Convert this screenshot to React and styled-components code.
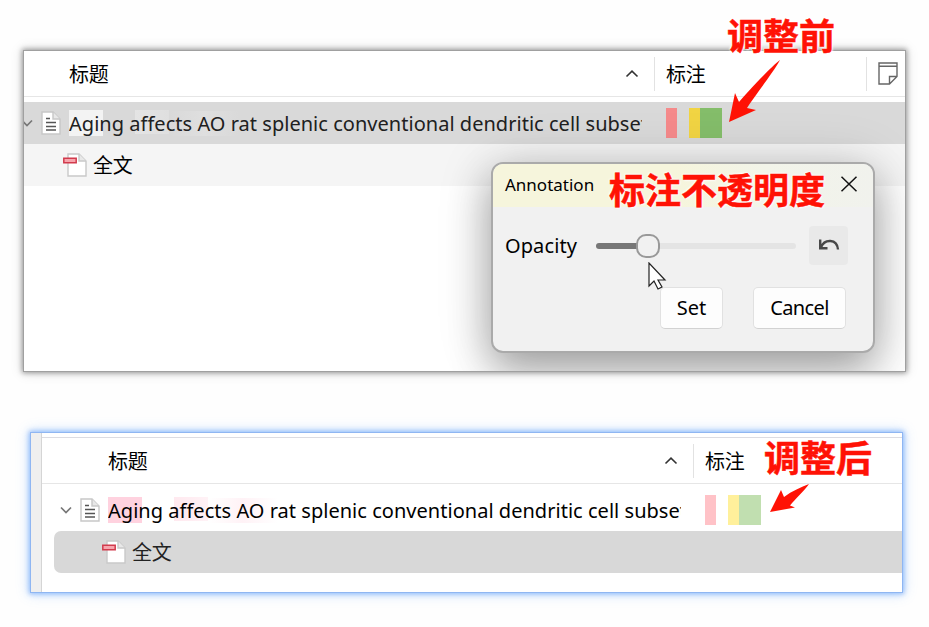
import React from "react";
import styled, { createGlobalStyle } from "styled-components";

const GlobalStyle = createGlobalStyle`
  * { box-sizing: border-box; }
  body {
    margin: 0;
    background: #fefefe;
    color: #000;
    font: 20px/26px "Noto Sans", "Noto Sans CJK SC", sans-serif;
  }
`;

const Page = styled.main`
  position: relative;
  width: 929px;
  height: 627px;
  padding: 51px 0 0 24px;
  overflow: hidden;
`;

const BeforePanel = styled.section`
  position: relative;
  width: 881px;
  height: 320px;
  background: #fff;
  box-shadow: 0 0 0 1px #a0a0a0, 0 0 5px 2px rgba(0, 0, 0, 0.36), 0 0 12px 2px rgba(0, 0, 0, 0.12);
`;

const Clip = styled.div`
  height: 100%;
  overflow: hidden;
`;

const DialogLayer = styled.div`
  position: absolute;
  inset: 0;
  overflow: hidden;
`;

const AfterPanel = styled.section`
  display: flex;
  width: 871px;
  height: 159px;
  margin: 62px 0 0 7px;
  background: #fff;
  box-shadow: 0 0 0 1px #8fb6f2, 0 0 5px 2px rgba(70, 140, 245, 0.55), 0 0 12px 2px rgba(80, 155, 250, 0.28);
`;

const Gutter = styled.div`
  width: 11px;
  background: #efefef;
  border-right: 1px solid #d5d5d5;
`;

const Tree = styled.div`
  flex: 1;
  min-width: 0;
  padding-top: 4px;
`;

const Header = styled.header`
  display: flex;
  align-items: center;
  height: ${(p) => p.$height}px;
  padding-left: ${(p) => p.$indent}px;
  border-top: ${(p) => (p.$topLine ? "1px solid #dcdce2" : "0")};
  border-bottom: 1px solid #e6e6e6;
  margin-bottom: 5px;
`;

const HeaderLabel = styled.span`
  font: 20px/26px "Noto Sans CJK SC", sans-serif;
  letter-spacing: -0.3px;
  width: ${(p) => p.$width || "auto"};
`;

const Divider = styled.i`
  width: 1px;
  height: 34px;
  background: #e2e2e2;
  margin: 0 ${(p) => p.$after || 0}px 0 ${(p) => p.$before}px;
`;

const Row = styled.div`
  display: flex;
  align-items: center;
  height: 42px;
  padding-left: ${(p) => p.$indent}px;
  margin-left: ${(p) => p.$inset || 0}px;
  background: ${(p) => p.$fill || "transparent"};
  border-radius: ${(p) => (p.$rounded ? "7px 0 0 7px" : "0")};
  color: ${(p) => p.$color || "#000"};
`;

const Title = styled.span`
  width: 573px;
  margin-left: 8px;
  padding-top: 1px;
  overflow: hidden;
  white-space: nowrap;
  letter-spacing: 0.03px;
  background: linear-gradient(${(p) => p.$tints[0]} 0 0) 0 0 / 34px 26px no-repeat,
    linear-gradient(90deg, ${(p) => p.$tints[1]}, ${(p) => p.$tints[2]}) 66px 0 / 34px 24px no-repeat,
    linear-gradient(90deg, transparent, ${(p) => p.$tints[2]} 50%, transparent) 100px 1px / 70px 25px no-repeat;
`;

const FileName = styled.span`
  margin-left: 6px;
  font: 20px/26px "Noto Sans CJK SC", sans-serif;
  letter-spacing: -0.3px;
`;

const Marks = styled.div`
  display: flex;
  height: 30px;
  margin-left: 24px;
`;

const Mark = styled.i`
  width: ${(p) => p.$w}px;
  margin-right: ${(p) => p.$gap || 0}px;
  background: ${(p) => p.$color};
`;

const Dialog = styled.section`
  position: absolute;
  left: 467px;
  top: 111px;
  width: 384px;
  height: 191px;
  border: 2px solid #aaa;
  border-radius: 12px;
  background: #f1f1f1;
  box-shadow: 0 18px 40px rgba(0, 0, 0, 0.3), 0 4px 56px rgba(0, 0, 0, 0.16);
`;

const DialogBar = styled.header`
  display: flex;
  align-items: center;
  justify-content: space-between;
  height: 43px;
  padding: 0 15px 3px 12px;
  border-radius: 10px 10px 0 0;
  background: linear-gradient(90deg, #f6f5dc 0, #f6f5dc 48%, #f2f4e9 72%, #f1f2ed 100%);
  font-size: 17px;
`;

const BarTitle = styled.span`
  padding-top: 1px;
`;

const SliderRow = styled.div`
  display: flex;
  align-items: center;
  height: 38px;
  margin-top: 19px;
  padding-left: 12px;
`;

const SliderLabel = styled.label`
  width: 91px;
  padding-top: 2px;
  letter-spacing: 0.1px;
`;

const Track = styled.div`
  display: flex;
  align-items: center;
  width: 200px;
  height: 6px;
  margin-top: 2px;
  border-radius: 3px;
  background: linear-gradient(90deg, #777 0 50px, #e4e4e4 50px);
`;

const Thumb = styled.i`
  width: 24px;
  height: 24px;
  margin-left: 40px;
  border: 2px solid #999;
  border-radius: 10px;
  background: #f1f1f1;
`;

const ResetButton = styled.button`
  display: grid;
  place-items: center;
  width: 39px;
  height: 39px;
  margin-left: 13px;
  padding: 0;
  border: 0;
  border-radius: 4px;
  background: #e9e9e9;
`;

const Actions = styled.footer`
  display: flex;
  justify-content: flex-end;
  gap: 30px;
  margin-top: 23px;
  padding-right: 27px;
`;

const ActionButton = styled.button`
  width: ${(p) => p.$w}px;
  height: 42px;
  padding: 0 0 1px;
  border: 1px solid #e1e1e1;
  border-bottom-color: #d2d2d2;
  border-radius: 5px;
  background: #fdfdfd;
  color: #000;
  font: inherit;
  letter-spacing: ${(p) => p.$tracking || 0}px;
`;

const Callout = styled.strong`
  position: absolute;
  left: ${(p) => p.$x}px;
  top: ${(p) => p.$y}px;
  color: #ff1205;
  font: 700 36px/48px "Noto Sans CJK SC", sans-serif;
  white-space: nowrap;
  -webkit-text-stroke: 0.5px #ff1205;
  text-shadow: 0 0 2px #fff, 1px 1px 2px #fff, -1px -1px 2px #fff;
`;

const Overlay = styled.svg`
  position: absolute;
  left: ${(p) => p.$x}px;
  top: ${(p) => p.$y}px;
`;

const Twisty = styled.svg`
  margin-left: ${(p) => p.$shift || 0}px;
  margin-right: 8px;
`;

const Chevron = ({ shift }) => (
  <Twisty $shift={shift} width="12" height="8" fill="none" stroke="#777" strokeWidth="1.7">
    <path d="M1 1.5 6 6.5 11 1.5" />
  </Twisty>
);

const SortMark = () => (
  <svg width="14" height="8" fill="none" stroke="#333" strokeWidth="1.6">
    <path d="M1.5 6.5 7 1.2 12.5 6.5" />
  </svg>
);

const ArticleIcon = () => (
  <svg width="20" height="24" fill="none">
    <path d="M1 1h11l7 7v15H1Z" fill="#fff" stroke="#c7c7c7" strokeWidth="1.4" />
    <path d="M12 1v7h7" fill="#e8e8e8" stroke="#c7c7c7" strokeWidth="1.4" />
    <path d="M5 7.5h4M5 11.5h10M5 15.5h10M5 19h10" stroke="#555" strokeWidth="1.5" />
  </svg>
);

const PdfIcon = () => (
  <svg width="24" height="24" fill="none">
    <path d="M5 1h11l7 7v15H5Z" fill="#fff" stroke="#c9c9c9" strokeWidth="1.4" />
    <path d="M16 1v7h7" fill="#e8e8e8" stroke="#c9c9c9" strokeWidth="1.4" />
    <path d="M.8 5.3h12.4v4.4H.8Z" fill="#f7a5ad" stroke="#d23b4d" strokeWidth="1.5" />
  </svg>
);

const NoteIcon = () => (
  <svg width="20" height="23" fill="none" stroke="#666" strokeWidth="1.4">
    <path d="M1 1h18v13.5l-7.5 7.5H1ZM1 4.3h18M11.5 22v-7.5H19" />
  </svg>
);

const paper = "Aging affects AO rat splenic conventional dendritic cell subsets";

export default function App() {
  return (
    <>
      <GlobalStyle />
      <Page>
        <BeforePanel>
          <Clip>
            <Header $height={46} $indent={45}>
              <HeaderLabel $width="556px">标题</HeaderLabel>
              <SortMark />
              <Divider $before={15} $after={11} />
              <HeaderLabel $width="200px">标注</HeaderLabel>
              <Divider $before={0} $after={11} />
              <NoteIcon />
            </Header>
            <Row $indent={0} $fill="#d9d9d9" $color="#202020">
              <Chevron shift={-3} />
              <ArticleIcon />
              <Title $tints={["#f3f3f3", "#e4e4e4", "#dfdfdf"]}>{paper}</Title>
              <Marks>
                <Mark $w={11} $gap={12} $color="#f58a8b" />
                <Mark $w={11} $color="#f1d443" />
                <Mark $w={22} $color="#84bd6a" />
              </Marks>
            </Row>
            <Row $indent={39} $fill="#f5f5f5">
              <PdfIcon />
              <FileName>全文</FileName>
            </Row>
          </Clip>
          <DialogLayer>
            <Dialog>
              <DialogBar>
                <BarTitle>Annotation</BarTitle>
                <svg width="18" height="16" fill="none" stroke="#111" strokeWidth="1.5">
                  <path d="m1.5.8 15 14.5m0-14.5-15 14.5" />
                </svg>
              </DialogBar>
              <SliderRow>
                <SliderLabel>Opacity</SliderLabel>
                <Track><Thumb /></Track>
                <ResetButton aria-label="Reset">
                  <svg width="22" height="14" fill="none" stroke="#484848" strokeWidth="2.4">
                    <path d="M2.2 1.5v8.8h7.3M2.8 9.7C6.5.5 19 .5 20 11.5" />
                  </svg>
                </ResetButton>
              </SliderRow>
              <Actions>
                <ActionButton $w={63}>Set</ActionButton>
                <ActionButton $w={93} $tracking={-0.6}>Cancel</ActionButton>
              </Actions>
            </Dialog>
          </DialogLayer>
        </BeforePanel>

        <AfterPanel>
          <Gutter />
          <Tree>
            <Header $height={47} $indent={66} $topLine>
              <HeaderLabel $width="556px">标题</HeaderLabel>
              <SortMark />
              <Divider $before={15} $after={11} />
              <HeaderLabel>标注</HeaderLabel>
            </Header>
            <Row $indent={18}>
              <Chevron />
              <ArticleIcon />
              <Title $tints={["#ffd2df", "#ffe9ef", "#fff2f6"]}>{paper}</Title>
              <Marks>
                <Mark $w={11} $gap={12} $color="#ffc2c7" />
                <Mark $w={11} $color="#fff09b" />
                <Mark $w={22} $color="#c1dfb0" />
              </Marks>
            </Row>
            <Row $indent={48} $inset={12} $fill="#d8d8d8" $rounded $color="#222">
              <PdfIcon />
              <FileName>全文</FileName>
            </Row>
          </Tree>
        </AfterPanel>

        <Callout $x={727} $y={10}>调整前</Callout>
        <Callout $x={609} $y={164}>标注不透明度</Callout>
        <Callout $x={764} $y={432}>调整后</Callout>
        <Overlay $x={729} $y={60} width="52" height="63" fill="#ff1205">
          <path d="M51 0C43 6 19 31 10 42L6 33 0 62 27 50l-9-2C24 38 44 13 51 0Z" />
        </Overlay>
        <Overlay $x={770} $y={483} width="40" height="30" fill="#ff1205">
          <path d="M39 1C31 4 22 8 14 14L11 7 0 29l25-4.5-5-2C25 16 34 8 39 1Z" />
        </Overlay>
        <Overlay $x={648} $y={262} width="19" height="28">
          <path d="M1 1v23l5-5 4 8 4-2-4-7h7Z" fill="#fff" stroke="#222" strokeWidth="1.2" />
        </Overlay>
      </Page>
    </>
  );
}
